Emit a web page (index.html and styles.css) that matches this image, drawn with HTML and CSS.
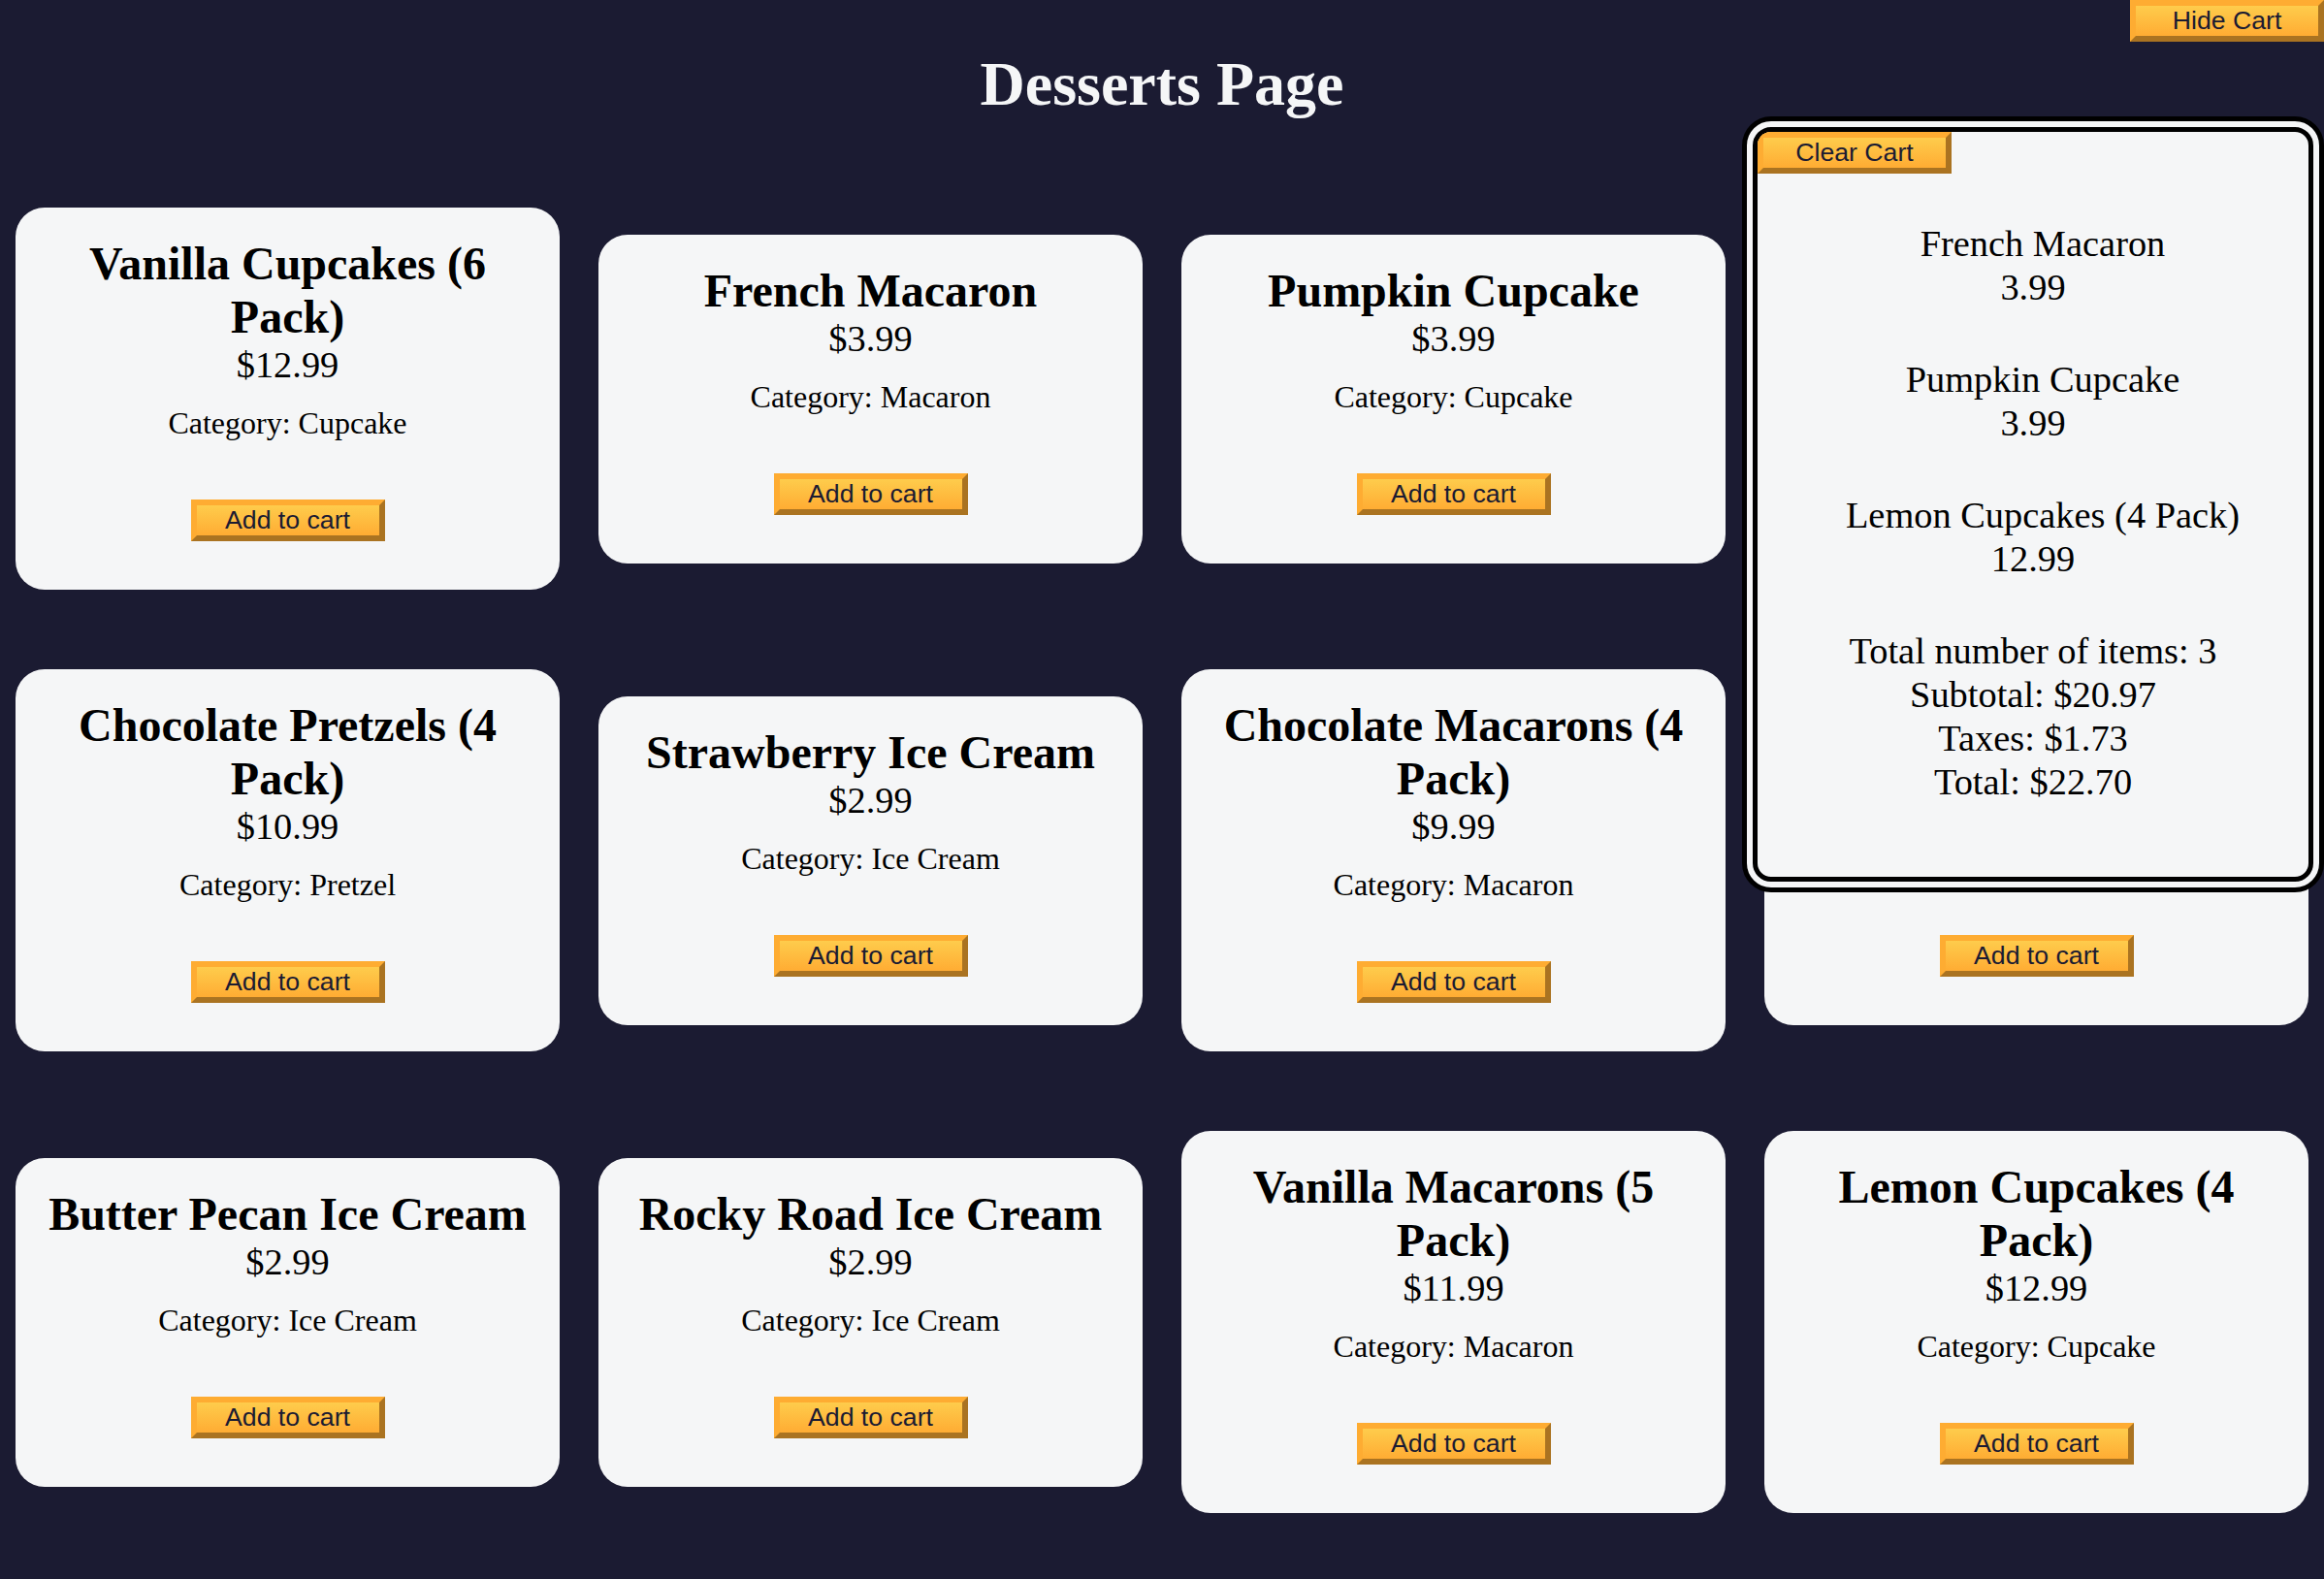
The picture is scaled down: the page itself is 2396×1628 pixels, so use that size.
FILE: index.html
```html
<!DOCTYPE html>
<html lang="en">
<head>
  <meta charset="UTF-8">
  <title>Desserts Page</title>
  <link rel="stylesheet" href="styles.css">
</head>
<body>
  <header>
    <h1 class="title">Desserts Page</h1>
  </header>
  <main>
    <button class="btn cart-btn" id="cart-btn" type="button">Hide Cart</button>
    <div class="card-container" id="dessert-card-container">
      <div class="dessert-card">
        <h2 class="dessert-name">Vanilla Cupcakes (6 Pack)</h2>
        <p class="dessert-price">$12.99</p>
        <p class="dessert-category">Category: Cupcake</p>
        <button class="btn add-to-cart-btn" type="button">Add to cart</button>
      </div>
      <div class="dessert-card">
        <h2 class="dessert-name">French Macaron</h2>
        <p class="dessert-price">$3.99</p>
        <p class="dessert-category">Category: Macaron</p>
        <button class="btn add-to-cart-btn" type="button">Add to cart</button>
      </div>
      <div class="dessert-card">
        <h2 class="dessert-name">Pumpkin Cupcake</h2>
        <p class="dessert-price">$3.99</p>
        <p class="dessert-category">Category: Cupcake</p>
        <button class="btn add-to-cart-btn" type="button">Add to cart</button>
      </div>
      <div class="dessert-card">
        <h2 class="dessert-name">Chocolate Cupcake</h2>
        <p class="dessert-price">$5.99</p>
        <p class="dessert-category">Category: Cupcake</p>
        <button class="btn add-to-cart-btn" type="button">Add to cart</button>
      </div>
      <div class="dessert-card">
        <h2 class="dessert-name">Chocolate Pretzels (4 Pack)</h2>
        <p class="dessert-price">$10.99</p>
        <p class="dessert-category">Category: Pretzel</p>
        <button class="btn add-to-cart-btn" type="button">Add to cart</button>
      </div>
      <div class="dessert-card">
        <h2 class="dessert-name">Strawberry Ice Cream</h2>
        <p class="dessert-price">$2.99</p>
        <p class="dessert-category">Category: Ice Cream</p>
        <button class="btn add-to-cart-btn" type="button">Add to cart</button>
      </div>
      <div class="dessert-card">
        <h2 class="dessert-name">Chocolate Macarons (4 Pack)</h2>
        <p class="dessert-price">$9.99</p>
        <p class="dessert-category">Category: Macaron</p>
        <button class="btn add-to-cart-btn" type="button">Add to cart</button>
      </div>
      <div class="dessert-card">
        <h2 class="dessert-name">Strawberry Pretzel</h2>
        <p class="dessert-price">$4.99</p>
        <p class="dessert-category">Category: Pretzel</p>
        <button class="btn add-to-cart-btn" type="button">Add to cart</button>
      </div>
      <div class="dessert-card">
        <h2 class="dessert-name">Butter Pecan Ice Cream</h2>
        <p class="dessert-price">$2.99</p>
        <p class="dessert-category">Category: Ice Cream</p>
        <button class="btn add-to-cart-btn" type="button">Add to cart</button>
      </div>
      <div class="dessert-card">
        <h2 class="dessert-name">Rocky Road Ice Cream</h2>
        <p class="dessert-price">$2.99</p>
        <p class="dessert-category">Category: Ice Cream</p>
        <button class="btn add-to-cart-btn" type="button">Add to cart</button>
      </div>
      <div class="dessert-card">
        <h2 class="dessert-name">Vanilla Macarons (5 Pack)</h2>
        <p class="dessert-price">$11.99</p>
        <p class="dessert-category">Category: Macaron</p>
        <button class="btn add-to-cart-btn" type="button">Add to cart</button>
      </div>
      <div class="dessert-card">
        <h2 class="dessert-name">Lemon Cupcakes (4 Pack)</h2>
        <p class="dessert-price">$12.99</p>
        <p class="dessert-category">Category: Cupcake</p>
        <button class="btn add-to-cart-btn" type="button">Add to cart</button>
      </div>
    </div>
    <div class="cart-container" id="cart-container">
      <button class="btn clear-cart-btn" id="clear-cart-btn" type="button">Clear Cart</button>
      <div class="products-container" id="products-container">
        <div class="product">
          <p><span class="product-count"></span>French Macaron</p>
          <p>3.99</p>
        </div>
        <div class="product">
          <p><span class="product-count"></span>Pumpkin Cupcake</p>
          <p>3.99</p>
        </div>
        <div class="product">
          <p><span class="product-count"></span>Lemon Cupcakes (4 Pack)</p>
          <p>12.99</p>
        </div>
      </div>
      <p>Total number of items: <span id="total-items">3</span></p>
      <p>Subtotal: <span id="subtotal">$20.97</span></p>
      <p>Taxes: <span id="taxes">$1.73</span></p>
      <p>Total: <span id="total">$22.70</span></p>
    </div>
  </main>
</body>
</html>
```
FILE: styles.css
```css
*,
*::before,
*::after {
  margin: 0;
  padding: 0;
  box-sizing: border-box;
}

html,
body {
  background-color: #1b1b32;
}

body {
  font-family: "Liberation Serif", "Times New Roman", serif;
  font-size: 32px;
  color: #000;
}

.title {
  color: #f5f6f7;
  text-align: center;
  font-size: 64px;
  font-weight: bold;
  margin: 50px 0;
}

.card-container {
  display: flex;
  flex-wrap: wrap;
  align-items: center;
  column-gap: 40px;
  row-gap: 82px;
  padding: 40px 16px;
}

.dessert-card {
  flex: 1 0 21%;
  background-color: #f5f6f7;
  padding: 30px;
  border-radius: 30px;
  display: flex;
  flex-direction: column;
  align-items: center;
  text-align: center;
}

.dessert-name {
  font-size: 48px;
  font-weight: bold;
}

.dessert-price {
  font-size: 38.4px;
}

.dessert-category {
  margin: 20px 0;
}

.btn {
  width: 200px;
  height: 43px;
  font-family: "Liberation Sans", Arial, sans-serif;
  font-size: 26.667px;
  line-height: 1;
  color: #1b1b32;
  background-color: #feac32;
  background-image: linear-gradient(#fecc4c, #ffac33);
  border-width: 6px;
  border-style: solid;
  border-color: #feac32 #aa7321 #aa7321 #feac32;
  cursor: pointer;
}

.add-to-cart-btn {
  margin: 40px 0 20px;
}

.cart-btn {
  position: absolute;
  top: 0;
  right: 0;
}

.cart-container {
  position: absolute;
  top: 120px;
  right: 0;
  width: 600px;
  height: 800px;
  background-color: #f5f6f7;
  border: 16px double #000;
  border-radius: 30px;
  text-align: center;
  font-size: 38.4px;
  line-height: 45px;
  overflow-y: auto;
}

.clear-cart-btn {
  display: block;
}

.product {
  margin: 50px 0;
}

.product-count {
  display: inline-block;
  margin-right: 20px;
}
```
